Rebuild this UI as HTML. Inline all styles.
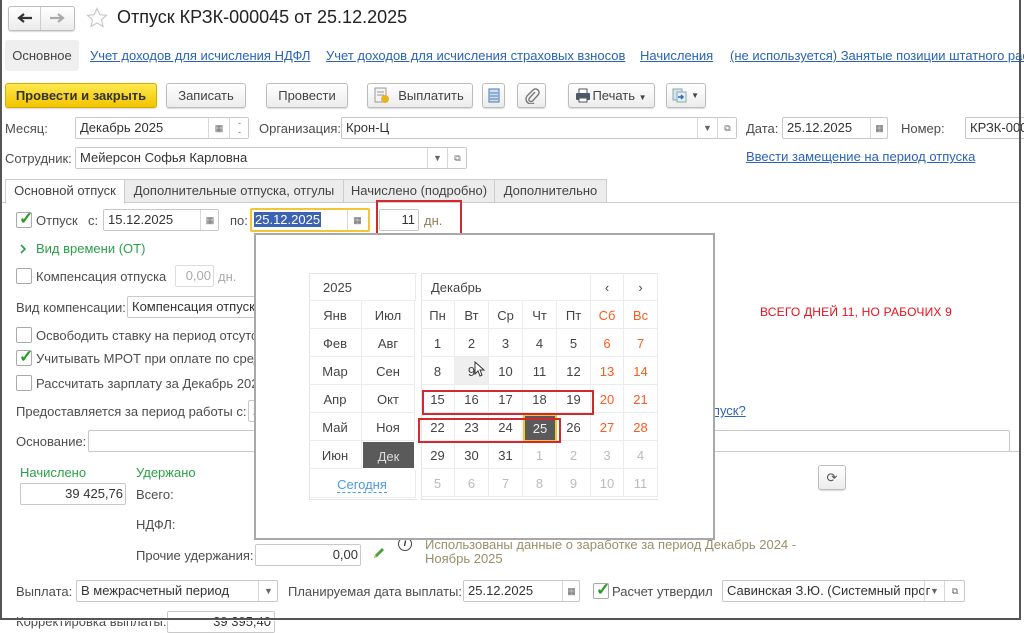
<!DOCTYPE html>
<html><head><meta charset="utf-8"><style>
*{box-sizing:border-box;margin:0;padding:0}
body{width:1024px;height:621px;overflow:hidden;background:#fff;font-family:"Liberation Sans",Arial,sans-serif;font-size:13px;color:#4d4d4d;position:relative}
.a{position:absolute;white-space:nowrap}
.f{position:absolute;border:1px solid #c8c8c8;background:#fff;border-radius:2px;height:22px;line-height:20px;padding-left:4px;color:#333;overflow:hidden;white-space:nowrap}
.btn{position:absolute;border:1px solid #bdbdbd;border-radius:3px;background:linear-gradient(#fff,#ececec);height:25px;line-height:23px;text-align:center;color:#444;box-shadow:0 1px 1px rgba(0,0,0,.15)}
.sub{position:absolute;top:0;bottom:0;border-left:1px solid #d8d8d8;text-align:center;color:#666;font-size:9px;line-height:20px}
.lnk{color:#2a63b8;text-decoration:underline}
.cb{position:absolute;width:16px;height:16px;border:1px solid #aaa;border-radius:2px;background:#fff}
.ck{position:absolute;left:2px;top:-4px;color:#2a9a2a;font-size:17px;font-weight:bold}
.tab{position:absolute;top:179px;height:24px;border:1px solid #ccc;background:#ececec;line-height:22px;text-align:center;color:#444}
.cell{position:absolute;text-align:center;width:34px;height:28px;line-height:30px;border-right:1px solid #ececec;border-bottom:1px solid #ececec;color:#444}
.red{color:#ff5a1e}.dim{color:#bbb}
.mc{position:absolute;width:53px;height:28px;line-height:30px;text-align:center;border-right:1px solid #ececec;border-bottom:1px solid #ececec;color:#444}
</style></head><body>

<!-- nav -->
<div class="btn" style="left:8px;top:6px;width:67px;height:25px;"></div>
<div class="a" style="left:40px;top:7px;height:23px;border-left:1px solid #ccc"></div>
<svg class="a" style="left:16px;top:12px" width="18" height="12"><path d="M16 6H4M8 2L3 6l5 4" stroke="#333" stroke-width="2.2" fill="none"/></svg>
<svg class="a" style="left:48px;top:12px" width="18" height="12"><path d="M2 6h12M10 2l5 4-5 4" stroke="#aaa" stroke-width="2.2" fill="none"/></svg>
<svg class="a" style="left:86px;top:7px" width="22" height="22" viewBox="0 0 22 22"><path d="M11 1.5l2.8 6.2 6.7.6-5 4.5 1.5 6.6L11 16l-6 3.4 1.5-6.6-5-4.5 6.7-.6z" fill="none" stroke="#c8c8c8" stroke-width="1.2"/></svg>
<div class="a" style="left:117px;top:7px;font-size:18px;color:#222">Отпуск КРЗК-000045 от 25.12.2025</div>

<!-- section links -->
<div class="a" style="left:5px;top:40px;width:74px;height:31px;background:#efefef;border-radius:3px;line-height:31px;text-align:center;color:#444">Основное</div>
<div class="a lnk" style="left:90px;top:48px">Учет доходов для исчисления НДФЛ</div>
<div class="a lnk" style="left:326px;top:48px">Учет доходов для исчисления страховых взносов</div>
<div class="a lnk" style="left:640px;top:48px">Начисления</div>
<div class="a lnk" style="left:730px;top:48px">(не используется) Занятые позиции штатного рас</div>

<!-- toolbar -->
<div class="btn" style="left:5px;top:83px;width:152px;background:linear-gradient(#ffe94d,#f1c400);border-color:#d4ad00;color:#333;font-weight:bold">Провести и закрыть</div>
<div class="btn" style="left:166px;top:83px;width:80px">Записать</div>
<div class="btn" style="left:266px;top:83px;width:82px">Провести</div>
<div class="btn" style="left:367px;top:83px;width:106px;padding-left:22px">Выплатить</div>
<svg class="a" style="left:374px;top:87px" width="16" height="17"><rect x="1" y="1" width="11" height="14" fill="#f4f4f4" stroke="#999"/><line x1="3" y1="5" x2="10" y2="5" stroke="#999"/><line x1="3" y1="8" x2="10" y2="8" stroke="#999"/><circle cx="11" cy="12" r="4" fill="#e8b320"/></svg>
<div class="btn" style="left:482px;top:83px;width:23px"></div>
<svg class="a" style="left:488px;top:88px" width="12" height="15"><rect x="1" y="1" width="10" height="13" fill="#cfe0f2" stroke="#4a78b0"/><line x1="2" y1="5" x2="10" y2="5" stroke="#4a78b0"/><line x1="2" y1="8" x2="10" y2="8" stroke="#4a78b0"/><line x1="2" y1="11" x2="10" y2="11" stroke="#4a78b0"/></svg>
<div class="btn" style="left:517px;top:83px;width:29px"></div>
<svg class="a" style="left:524px;top:87px" width="16" height="17"><path d="M11 5L5.5 11a2 2 0 0 0 3 3L14 8a3.5 3.5 0 0 0-5-5L3 9a5 5 0 0 0 7 7" stroke="#777" stroke-width="1.4" fill="none"/></svg>
<div class="btn" style="left:568px;top:83px;width:87px;padding-left:16px">Печать <span style="font-size:8px">▼</span></div>
<svg class="a" style="left:575px;top:88px" width="16" height="15"><rect x="4" y="1" width="8" height="5" fill="#fff" stroke="#555"/><rect x="1" y="5" width="14" height="7" rx="1" fill="#4a5a6a"/><rect x="4" y="10" width="8" height="4" fill="#fff" stroke="#555"/></svg>
<div class="btn" style="left:666px;top:83px;width:40px;text-align:right;padding-right:6px;font-size:8px">▼</div>
<svg class="a" style="left:672px;top:88px" width="16" height="15"><rect x="1" y="1" width="9" height="11" fill="#d6e4f0" stroke="#8aa"/><rect x="5" y="4" width="9" height="10" fill="#e8eef5" stroke="#8aa"/><path d="M6 9h5M9 7l2 2-2 2" stroke="#2a6ab0" fill="none" stroke-width="1.5"/></svg>

<!-- row Месяц -->
<div class="a" style="left:5px;top:121px">Месяц:</div>
<div class="f" style="left:75px;top:117px;width:174px">Декабрь 2025<div class="sub" style="left:132px;width:21px">&#9638;</div><div class="sub" style="left:153px;width:20px;line-height:9px;padding-top:1px">-<br>-</div></div>
<div class="a" style="left:259px;top:121px">Организация:</div>
<div class="f" style="left:341px;top:117px;width:396px">Крон-Ц<div class="sub" style="left:355px;width:20px">▼</div><div class="sub" style="left:375px;width:20px">&#10697;</div></div>
<div class="a" style="left:746px;top:121px">Дата:</div>
<div class="f" style="left:782px;top:117px;width:106px">25.12.2025<div class="sub" style="left:87px;width:18px">&#9638;</div></div>
<div class="a" style="left:901px;top:121px">Номер:</div>
<div class="f" style="left:965px;top:117px;width:60px">КРЗК-000</div>

<div class="a" style="left:5px;top:151px">Сотрудник:</div>
<div class="f" style="left:75px;top:147px;width:392px">Мейерсон Софья Карловна<div class="sub" style="left:351px;width:20px">▼</div><div class="sub" style="left:371px;width:20px">&#10697;</div></div>
<div class="a lnk" style="left:746px;top:149px">Ввести замещение на период отпуска</div>

<!-- tabs -->
<div class="a" style="left:0;top:202px;width:1020px;border-top:1px solid #ccc"></div>
<div class="tab" style="left:5px;width:120px;background:#fff;border-bottom-color:#fff;height:25px">Основной отпуск</div>
<div class="tab" style="left:124px;width:220px">Дополнительные отпуска, отгулы</div>
<div class="tab" style="left:343px;width:152px">Начислено (подробно)</div>
<div class="tab" style="left:494px;width:113px">Дополнительно</div>

<!-- row Отпуск -->
<div class="cb" style="left:16px;top:212px"><span class="ck">✓</span></div>
<div class="a" style="left:36px;top:213px">Отпуск</div>
<div class="a" style="left:88px;top:213px">с:</div>
<div class="f" style="left:103px;top:209px;width:116px">15.12.2025<div class="sub" style="left:96px;width:19px">&#9638;</div></div>
<div class="a" style="left:230px;top:213px">по:</div>
<div class="f" style="left:250px;top:208px;width:120px;height:24px;border:2px solid #f4c534;padding-left:2px"><span style="background:#3c62b4;color:#fff;padding:0 1px">25.12.2025</span><div class="sub" style="left:95px;width:20px">&#9638;</div></div>
<div class="f" style="left:379px;top:209px;width:40px;text-align:right;padding-right:3px">11</div>
<div class="a" style="left:424px;top:213px;color:#8a7f57">дн.</div>
<div class="a" style="left:376px;top:200px;width:86px;height:35px;border:2px solid #d3282f"></div>

<svg class="a" style="left:18px;top:243px" width="10" height="12"><path d="M3 2l4 4-4 4" stroke="#2aa048" stroke-width="1.6" fill="none"/></svg>
<div class="a" style="left:36px;top:241px;color:#2aa048">Вид времени (ОТ)</div>
<div class="cb" style="left:16px;top:268px"></div>
<div class="a" style="left:36px;top:269px">Компенсация отпуска</div>
<div class="f" style="left:175px;top:265px;width:39px;text-align:right;padding-right:2px;color:#aaa;border-color:#ddd">0,00</div>
<div class="a" style="left:218px;top:269px;color:#aaa">дн.</div>
<div class="a" style="left:16px;top:300px">Вид компенсации:</div>
<div class="f" style="left:127px;top:296px;width:140px">Компенсация отпуска</div>
<div class="cb" style="left:16px;top:327px"></div>
<div class="a" style="left:36px;top:328px">Освободить ставку на период отсутствия</div>
<div class="cb" style="left:16px;top:350px"><span class="ck">✓</span></div>
<div class="a" style="left:36px;top:351px">Учитывать МРОТ при оплате по среднему</div>
<div class="cb" style="left:16px;top:375px"></div>
<div class="a" style="left:36px;top:376px">Рассчитать зарплату за Декабрь 2025</div>
<div class="a" style="left:16px;top:404px">Предоставляется за период работы с:</div>
<div class="f" style="left:248px;top:400px;width:20px">2</div>
<div class="a lnk" style="left:700px;top:403px">отпуск?</div>
<div class="a" style="left:16px;top:434px">Основание:</div>
<div class="f" style="left:88px;top:430px;width:922px"></div>
<div class="a" style="left:715px;top:451px;width:305px;border-top:1px solid #ccc"></div>

<div class="a" style="left:20px;top:465px;color:#2aa048">Начислено</div>
<div class="a" style="left:136px;top:465px;color:#2aa048">Удержано</div>
<div class="f" style="left:20px;top:483px;width:106px;text-align:right;padding-right:2px">39 425,76</div>
<div class="a" style="left:136px;top:487px">Всего:</div>
<div class="a" style="left:136px;top:517px">НДФЛ:</div>
<div class="a" style="left:136px;top:548px">Прочие удержания:</div>
<div class="f" style="left:255px;top:544px;width:106px;text-align:right;padding-right:2px">0,00</div>
<svg class="a" style="left:372px;top:546px" width="14" height="14"><path d="M2 12l1-3 7-7 2 2-7 7z" fill="#4aa040"/><path d="M2 12l1-3 2 2z" fill="#e8b060"/></svg>
<div class="a" style="left:398px;top:537px;width:14px;height:14px;border:1.5px solid #444;border-radius:50%;font-size:10px;line-height:11px;text-align:center;font-weight:bold;font-style:italic;color:#333">i</div>
<div class="a" style="left:425px;top:538px;color:#9a8f6a;line-height:14px">Использованы данные о заработке за период Декабрь 2024 -<br>Ноябрь 2025</div>
<div class="btn" style="left:818px;top:465px;width:28px;font-size:13px;color:#555">&#10227;</div>

<div class="a" style="left:16px;top:584px">Выплата:</div>
<div class="f" style="left:76px;top:580px;width:202px">В межрасчетный период<div class="sub" style="left:181px;width:20px">▼</div></div>
<div class="a" style="left:288px;top:584px">Планируемая дата выплаты:</div>
<div class="f" style="left:463px;top:580px;width:117px">25.12.2025<div class="sub" style="left:98px;width:18px">&#9638;</div></div>
<div class="cb" style="left:593px;top:583px"><span class="ck">✓</span></div>
<div class="a" style="left:612px;top:584px">Расчет утвердил</div>
<div class="f" style="left:722px;top:580px;width:243px">Савинская З.Ю. (Системный прог<div class="sub" style="left:201px;width:20px">▼</div><div class="sub" style="left:221px;width:21px">&#10697;</div></div>
<div class="a" style="left:16px;top:614px">Корректировка выплаты:</div>
<div class="f" style="left:167px;top:611px;width:108px;text-align:right;padding-right:3px">39 395,40</div>

<!-- popup -->
<div class="a" style="left:254px;top:233px;width:461px;height:307px;background:#fff;border:2px solid #a8a8a8"></div>
<div class="a" style="left:309px;top:273px;width:108px;height:227px;border:1px solid #e4e4e4;border-right:none"></div>
<div class="mc" style="left:309px;top:273px;width:107px;text-align:left;padding-left:14px">2025</div>
<div class="mc" style="left:309px;top:301px">Янв</div><div class="mc" style="left:362px;top:301px">Июл</div>
<div class="mc" style="left:309px;top:329px">Фев</div><div class="mc" style="left:362px;top:329px">Авг</div>
<div class="mc" style="left:309px;top:357px">Мар</div><div class="mc" style="left:362px;top:357px">Сен</div>
<div class="mc" style="left:309px;top:385px">Апр</div><div class="mc" style="left:362px;top:385px">Окт</div>
<div class="mc" style="left:309px;top:413px">Май</div><div class="mc" style="left:362px;top:413px">Ноя</div>
<div class="mc" style="left:309px;top:441px">Июн</div><div class="mc" style="left:362px;top:441px;background:#5a5a5a;color:#ddd;border:1px solid #fff">Дек</div>
<div class="mc" style="left:309px;top:470px;width:107px"><span style="color:#4a9be0;border-bottom:1px dashed #4a9be0">Сегодня</span></div>

<div class="a" style="left:421px;top:273px;width:237px;height:227px;border:1px solid #e4e4e4;border-right:none"></div>
<div class="cell" style="left:421px;top:273px;width:170px;text-align:left;padding-left:10px">Декабрь</div>
<div class="cell" style="left:591px;top:273px;width:33px">&lsaquo;</div>
<div class="cell" style="left:624px;top:273px;width:34px">&rsaquo;</div>
<div class="cell" style="left:421px;top:301px">Пн</div><div class="cell" style="left:455px;top:301px">Вт</div><div class="cell" style="left:489px;top:301px">Ср</div><div class="cell" style="left:523px;top:301px">Чт</div><div class="cell" style="left:557px;top:301px">Пт</div><div class="cell red" style="left:591px;top:301px;width:33px">Сб</div><div class="cell red" style="left:624px;top:301px">Вс</div>

<div class="cell" style="left:421px;top:329px">1</div><div class="cell" style="left:455px;top:329px">2</div><div class="cell" style="left:489px;top:329px">3</div><div class="cell" style="left:523px;top:329px">4</div><div class="cell" style="left:557px;top:329px">5</div><div class="cell red" style="left:591px;top:329px;width:33px">6</div><div class="cell red" style="left:624px;top:329px">7</div>
<div class="cell" style="left:421px;top:357px">8</div><div class="cell" style="left:455px;top:357px;background:#efefef">9</div><div class="cell" style="left:489px;top:357px">10</div><div class="cell" style="left:523px;top:357px">11</div><div class="cell" style="left:557px;top:357px">12</div><div class="cell red" style="left:591px;top:357px;width:33px">13</div><div class="cell red" style="left:624px;top:357px">14</div>
<div class="cell" style="left:421px;top:385px">15</div><div class="cell" style="left:455px;top:385px">16</div><div class="cell" style="left:489px;top:385px">17</div><div class="cell" style="left:523px;top:385px">18</div><div class="cell" style="left:557px;top:385px">19</div><div class="cell red" style="left:591px;top:385px;width:33px">20</div><div class="cell red" style="left:624px;top:385px">21</div>
<div class="cell" style="left:421px;top:413px">22</div><div class="cell" style="left:455px;top:413px">23</div><div class="cell" style="left:489px;top:413px">24</div><div class="cell" style="left:523px;top:414px;background:#5a5a5a;color:#eee;border:2px solid #f4c534;line-height:26px">25</div><div class="cell" style="left:557px;top:413px">26</div><div class="cell red" style="left:591px;top:413px;width:33px">27</div><div class="cell red" style="left:624px;top:413px">28</div>
<div class="cell" style="left:421px;top:441px">29</div><div class="cell" style="left:455px;top:441px">30</div><div class="cell" style="left:489px;top:441px">31</div><div class="cell dim" style="left:523px;top:441px">1</div><div class="cell dim" style="left:557px;top:441px">2</div><div class="cell dim" style="left:591px;top:441px;width:33px">3</div><div class="cell dim" style="left:624px;top:441px">4</div>
<div class="cell dim" style="left:421px;top:469px">5</div><div class="cell dim" style="left:455px;top:469px">6</div><div class="cell dim" style="left:489px;top:469px">7</div><div class="cell dim" style="left:523px;top:469px">8</div><div class="cell dim" style="left:557px;top:469px">9</div><div class="cell dim" style="left:591px;top:469px;width:33px">10</div><div class="cell dim" style="left:624px;top:469px">11</div>
<svg class="a" style="left:474px;top:361px" width="12" height="16"><path d="M1 1v12l3-3 2 5 2-1-2-5h4z" fill="#fff" stroke="#333"/></svg>

<div class="a" style="left:422px;top:390px;width:172px;height:25px;border:2px solid #d3282f"></div>
<div class="a" style="left:418px;top:418px;width:143px;height:25px;border:2px solid #d3282f"></div>

<div class="a" style="left:760px;top:305px;color:#e8101a;font-size:12px;letter-spacing:.2px">ВСЕГО ДНЕЙ 11, НО РАБОЧИХ 9</div>

<!-- frame -->
<div class="a" style="left:0;top:619px;width:1024px;height:2px;background:#fff"></div>
<div class="a" style="left:0;top:0;width:1021px;height:620px;border-left:2px solid #555;border-right:2px solid #555;border-bottom:2px solid #555"></div>
</body></html>
